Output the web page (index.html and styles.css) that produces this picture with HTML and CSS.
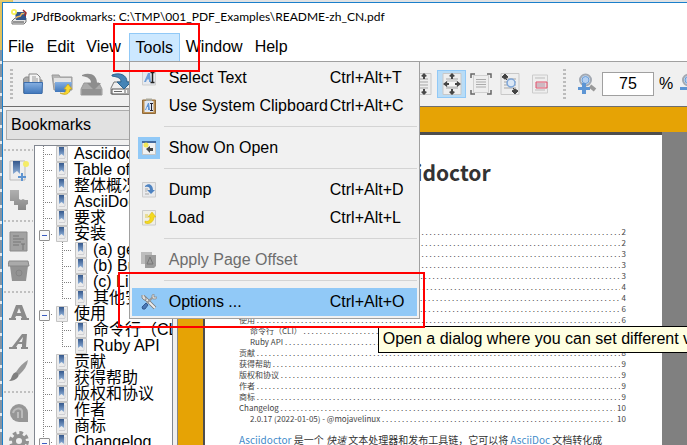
FILE: index.html
```html
<!DOCTYPE html>
<html lang="en">
<head>
<meta charset="utf-8">
<title>JPdfBookmarks</title>
<link rel="stylesheet" href="styles.css">
</head>
<body>
<svg class="defs" aria-hidden="true">
  <defs>
    <linearGradient id="blue" x1="0" y1="0" x2="0" y2="1"><stop offset="0" stop-color="#86b0e2"/><stop offset="1" stop-color="#4077bb"/></linearGradient>
    <linearGradient id="ribbon" x1="0" y1="0" x2="0" y2="1"><stop offset="0" stop-color="#35588c"/><stop offset="1" stop-color="#8fb0d8"/></linearGradient>
    <linearGradient id="gray" x1="0" y1="0" x2="0" y2="1"><stop offset="0" stop-color="#b0b0b0"/><stop offset="1" stop-color="#888"/></linearGradient>
    <symbol id="mark" viewBox="0 0 12 16"><path d="M.5.5h11v15H.5z" fill="#ececec" stroke="#c4c4c4"/><path d="M3 1h5v9l-2.500-2L3 10z" fill="url(#ribbon)"/><path d="M9 3v9M3 12.500h6" stroke="#d0d0d4" fill="none"/></symbol>
    <symbol id="page" viewBox="0 0 20 22"><path d="M1 .5h18v21H1z" fill="#eee" stroke="#c8c8c8"/><path d="M4 6h12M4 9h12M4 12h12M4 15h12" stroke="#a5a5a5"/></symbol>
    <symbol id="letter" viewBox="0 0 14 16"><path d="M.5.5h13v14.500H.5z" fill="#e6e9ee" stroke="#cfcfcf"/><path d="M2 12 6 3h2l1 9H7V9.500H5L4 12z" fill="#6d9fd9"/><path d="M8.500 2.500h4M10.500 3v9M8.500 12.500h4" stroke="#222" stroke-width="1.500"/></symbol>
    <symbol id="zoom" viewBox="0 0 20 22"><path d="m13 13 5 4" stroke="#999" stroke-width="4"/><circle cx="8.500" cy="7" r="5.500" fill="#d2e4f8" stroke="#a3a9b2" stroke-width="2"/><circle cx="8.500" cy="7" r="3.500" fill="#b4d0f2" stroke="#6a9cd4"/></symbol>
  </defs>
</svg>
<div class="window">
  <header class="titlebar">
    <svg width="16" height="16" viewBox="0 0 16 16"><path d="M1 12 4 9h11v4l-2 2H1z" fill="#e6e6e6" stroke="#777"/><path d="M2 13h11" stroke="#444"/><path d="M4 3h9l2 2v6H5z" fill="#32568c"/><path d="M5 9c2-3 4 0 5-3s2 0 3-2" fill="none" stroke="#f0b45a" stroke-width="1.500"/><path d="m12 1 3 3-1 3" stroke="#9c2b2b" fill="none" stroke-width="1.500"/><circle cx="3" cy="3" r="3" fill="#f7ef58"/><circle cx="3" cy="3" r="1.200" fill="#fff"/></svg>
    <h1>JPdfBookmarks: C:\TMP\001_PDF_Examples\README-zh_CN.pdf</h1>
  </header>
  <nav class="menubar">
    <button>File</button><button>Edit</button><button>View</button>
    <div class="open">
      <button class="active">Tools</button>
      <div class="popup">
        <button><span class="pic"><svg width="14" height="16"><use href="#letter"/></svg></span><span>Select Text</span><kbd>Ctrl+Alt+T</kbd></button>
        <button><span class="pic"><svg width="14" height="16" viewBox="0 0 14 16"><path d="M.5 2h13v13.500H.5z" fill="#bd8f50" stroke="#8f6a3a"/><path d="M2.500 3h9v11h-9z" fill="#dfe8f4"/><path d="M4 .5h6V3H4z" fill="#aaa89a"/><path d="m3 12 3-7h1l1 7H6V9H5l-1 3z" fill="#5f94d4"/><path d="M8 5.500h3M9.500 5v7M8 12.500h3" stroke="#223"/></svg></span><span>Use System Clipboard</span><kbd>Ctrl+Alt+C</kbd></button>
        <hr>
        <button><span class="pic on"><svg width="14" height="14" viewBox="0 0 14 14"><path d="M.5 1h13v12.500H.5z" fill="#f1f1f1" stroke="#c5c5c5"/><path d="M0 1h14" stroke="#446c9f" stroke-width="2"/><circle cx="4" cy="4" r="2.500" fill="#f3e756"/><path d="m4 8 4-3v2h3v3H8v2z" fill="#454545"/></svg></span><span>Show On Open</span></button>
        <hr>
        <button><span class="pic"><svg width="14" height="16" viewBox="0 0 14 16"><path d="M.5.5h13v14.500H.5z" fill="#e9eaec" stroke="#ccc"/><path d="M3 4c4-4 8-1 8 4h2l-4 4-4-4h3C8 5 6 4 3 5z" fill="#4e83c1"/><path d="M3 7h3M3 9h2M3 12h4" stroke="#aaa"/></svg></span><span>Dump</span><kbd>Ctrl+Alt+D</kbd></button>
        <button><span class="pic"><svg width="14" height="16" viewBox="0 0 14 16"><path d="M.5.5h13v14.500H.5z" fill="#f0efe6" stroke="#ccc"/><path d="M3 11c3 1 5 0 5-4H6l4-5 4 5h-2c0 5-5 8-9 6z" fill="#f3d91f" stroke="#d3b313" stroke-width=".5"/><path d="M3 5h3M3 7h3" stroke="#e0c94c"/></svg></span><span>Load</span><kbd>Ctrl+Alt+L</kbd></button>
        <hr>
        <button disabled><span class="pic"><svg width="16" height="16" viewBox="0 0 16 16"><path d="M0 0h11v12H0z" fill="#bdbdbd"/><path d="M4 3h11v11l-2 2H4z" fill="#9c9c9c"/><path d="m6 12 3-7 3 7z" fill="none" stroke="#777"/></svg></span><span>Apply Page Offset</span></button>
        <hr>
        <button class="hot"><span class="pic"><svg width="16" height="16" viewBox="0 0 16 16"><path d="M3 3 14 14" stroke="#777" stroke-width="3.500"/><path d="M3 3 14 14" stroke="#eee" stroke-width="2"/><path d="M1 1v3l2 2h2V4L3 1" fill="#ddd" stroke="#888"/><path d="m6 9 7-7" stroke="#999" stroke-width="2"/><path d="M11 3V1l2-1v3h3l-1 2h-3z" fill="#ddd" stroke="#888" stroke-width=".7"/><path d="m1 13 4-4 2 2-3 4q-3 1-3-2z" fill="#4a78b5" stroke="#335a91"/></svg></span><span>Options ...</span><kbd>Ctrl+Alt+O</kbd></button>
        <div class="tip" role="tooltip">Open a dialog where you can set different values</div>
        <div class="frame frame-options"></div>
      </div>
      <div class="frame frame-tools"></div>
    </div>
    <button>Window</button><button>Help</button>
  </nav>
  <div class="toolbar">
    <div class="tools files">
      <i class="grip"></i>
      <button aria-label="Open"><svg width="22" height="22" viewBox="0 0 22 22"><path d="M1.500 20V6l2-2H9l1 3h10v13z" fill="#aaa" stroke="#8a8a8a"/><path d="M7 11V1h8l3 3v7z" fill="#f4f4f4" stroke="#888"/><path d="M10 4h4M10 6h6M10 8h6" stroke="#999"/><path d="M2 9.500h18.500l-.5 11H2z" fill="url(#blue)" stroke="#3b6eae"/></svg></button>
      <button aria-label="Reopen"><svg width="22" height="22" viewBox="0 0 22 22"><path d="M1 2h7l1 2h12v13H3z" fill="#b5b5b5" stroke="#999"/><path d="M3 5h17v5H3z" fill="#e3e3e3"/><path d="M4 9h17l-2 10H4z" fill="url(#blue)"/><path d="M9 20c5 1 6-1 6-4h-2l4-5 4 5h-2c0 5-5 7-10 4z" fill="#f8d72e" stroke="#c9a41a" stroke-width=".7"/></svg></button>
      <button aria-label="Save"><svg width="23" height="23" viewBox="0 0 23 23"><path d="M4 10h15l3 6v6H1v-6z" fill="#aaa" stroke="#999"/><path d="M2 16h19v6H2z" fill="#929292"/><path d="M2 2c8-3 15 0 15 8h4l-7 7-7-7h4c0-4-3-6-9-7z" fill="#8d8d8d"/></svg></button>
      <button aria-label="Save as"><svg width="23" height="23" viewBox="0 0 23 23"><path d="M4 9h15l3 6v6H1v-6z" fill="#eee" stroke="#777"/><path d="M2 16h19v5H2z" fill="#fafafa" stroke="#555"/><path d="M4 18.500h8M15 17v3M18 17v3" stroke="#666"/><path d="M2 2c8-3 15 0 15 7h4l-7 7-7-7h4c0-4-3-5-9-6z" fill="#4584b6" stroke="#2d648f"/></svg></button>
    </div>
    <div class="tools views">
      <button aria-label="Fit height"><svg width="20" height="22" viewBox="0 0 20 22"><use href="#page"/><path d="M9 3 12 0l3 3-2 1v2h-2V4zM9 19l3 3 3-3-2-1v-2h-2v2z" fill="#484848"/></svg></button>
      <button class="picked" aria-label="Fit page"><svg width="20" height="22" viewBox="0 0 20 22"><use href="#page"/><path d="M5 8h10v6H5z" fill="#f5f5f5" stroke="#bbb"/><path d="m7 3 3-3 3 3-2 1v2H9V4zM7 19l3 3 3-3-2-1v-2H9v2zM1 11l4-3v2h2v2H5v2zM19 11l-4-3v2h-2v2h2v2z" fill="#454545"/></svg></button>
      <button aria-label="Fit native"><svg width="22" height="22" viewBox="0 0 22 22"><path d="M3.500 2.500h15v17h-15z" fill="#eee" stroke="#d0d0d0"/><path d="M6 6.500h10M6 9h10M6 11.500h10M6 14h10" stroke="#aaa"/><path d="M1 5V1h4M17 1h4v4M1 17v4h4M17 21h4v-4" fill="none" stroke="#666" stroke-width="1.500"/></svg></button>
      <button aria-label="Fit selection"><svg width="20" height="22" viewBox="0 0 20 22"><use href="#page"/><circle cx="11" cy="10" r="4" fill="#dbe7f5" stroke="#7ea6d8" stroke-width="1.500"/><path d="m2 4 3-3 3 3-3 2zM12 18l3-2 3 2-3 3zM5 5l2 2M13 15l2 2" fill="#444" stroke="#444"/></svg></button>
      <button aria-label="Fit rectangle"><svg width="16" height="20" viewBox="0 0 16 20"><path d="M.5 1h15v18H.5z" fill="#eee" stroke="#ccc"/><path d="M3 4h10M3 16h10" stroke="#bbb"/><path d="M4 10h9M4 12h9" stroke="#889"/><path d="M4 8h11v6H4z" fill="#e9b7c0" fill-opacity=".4" stroke="#e0506b"/></svg></button>
    </div>
    <div class="tools zoomer">
      <i class="grip"></i>
      <button aria-label="Zoom in"><svg width="20" height="22" viewBox="0 0 20 22"><use href="#zoom"/><path d="M5 10h4v4h4v3H9v4H5v-4H1v-3h4z" fill="#5d95d4"/></svg></button>
      <label class="percent"><input type="text" value="75" aria-label="Zoom"><span>%</span></label>
      <button aria-label="Zoom out"><svg width="20" height="22" viewBox="0 0 20 22"><use href="#zoom"/><path d="M0 14h12v3H0z" fill="#5d95d4"/></svg></button>
    </div>
  </div>
  <div class="main">
    <section class="side">
      <h2>Bookmarks</h2>
      <div class="cols">
        <div class="strip">
          <i class="hgrip"></i>
          <button aria-label="Add bookmark"><svg width="20" height="22" viewBox="0 0 20 22"><path d="M1 1h15v19H1z" fill="#eee" stroke="#bbb"/><path d="M4 1h7v13l-3-3-4 3z" fill="url(#ribbon)"/><circle cx="17" cy="4" r="3" fill="#f5ec66"/><path d="M12 13h2v3h3v2h-3v3h-2v-3H9v-2h3z" fill="#5e94d0"/></svg></button>
          <button aria-label="Add child"><svg width="20" height="22" viewBox="0 0 20 22"><path d="M1 1h9v9l2 1 2-1 2 1h3v4l-2 1v5H9v-5H5v-4H1z" fill="url(#gray)"/></svg></button>
          <i class="hgrip"></i>
          <button aria-label="Rename"><svg width="20" height="22" viewBox="0 0 20 22"><path d="M1 1h17v19H1z" fill="#a2a2a2" stroke="#8a8a8a"/><path d="M4 5h6M4 8h11M4 11h8M4 14h6M12 13h4M14 13v6" stroke="#777"/></svg></button>
          <button aria-label="Delete"><svg width="22" height="22" viewBox="0 0 22 22"><path d="M2 6h18l-2 15H4z" fill="#939393"/><path d="M1 1h19l1 5H0z" fill="#aaa" stroke="#888"/><circle cx="11" cy="13" r="3" fill="none" stroke="#858585"/></svg></button>
          <i class="hgrip"></i>
          <button aria-label="Bold"><svg width="20" height="22" viewBox="0 -2 20 22"><path fill-rule="evenodd" d="M0 16v-2h2L7 1h6l5 13h2v2h-8v-2h1l-1-2H7l-1 2h1v2zM8 9h4l-2-5z" fill="#8b8b8b"/></svg></button>
          <button aria-label="Italic"><svg width="20" height="22" viewBox="0 -2 20 22"><path fill-rule="evenodd" d="M0 16v-2h3L13 1h5l-1 13h2v2h-7v-2h1v-3H9l-2 3h1v2zM10 9h3l1-5z" fill="#8b8b8b"/></svg></button>
          <button aria-label="Colour"><svg width="20" height="22" viewBox="0 0 20 22"><path d="M19 0q-1 8-9 15l-3-3Q12 4 19 0z" fill="#999"/><path d="M7 12q4 2 2 5-3 4-9 4 2-1 3-5 1-3 4-4z" fill="#7f7f7f"/></svg></button>
          <i class="hgrip"></i>
          <button aria-label="Link"><svg width="20" height="22" viewBox="0 -1 20 22"><path d="M10 1a9 9 0 0 1 9 9v9h-9A9 9 0 0 1 10 1z" fill="#969696"/><path d="M4 10c1-5 8-6 9-2v7M9 9v6" fill="none" stroke="#bbb" stroke-width="2"/></svg></button>
          <button aria-label="Settings"><svg width="20" height="20" viewBox="0 0 20 20"><circle cx="10" cy="10" r="8" fill="none" stroke="#929292" stroke-width="4" stroke-dasharray="3.500 2.800"/><circle cx="10" cy="10" r="5" fill="none" stroke="#929292" stroke-width="4"/></svg></button>
        </div>
        <ul class="tree">
          <li><i class="limb"></i><svg><use href="#mark"/></svg>Asciidoctor</li>
          <li><i class="limb"></i><svg><use href="#mark"/></svg>Table of Contents</li>
          <li><i class="limb"></i><svg><use href="#mark"/></svg>整体概况</li>
          <li><i class="limb"></i><svg><use href="#mark"/></svg>AsciiDoc</li>
          <li><i class="limb"></i><svg><use href="#mark"/></svg>要求</li>
          <li><i class="limb fold"></i><svg><use href="#mark"/></svg>安装</li>
          <li><i class="limb pass"></i><i class="limb sub"></i><svg><use href="#mark"/></svg>(a) gem install</li>
          <li><i class="limb pass"></i><i class="limb sub"></i><svg><use href="#mark"/></svg>(b) Bundler</li>
          <li><i class="limb pass"></i><i class="limb sub"></i><svg><use href="#mark"/></svg>(c) Linux</li>
          <li><i class="limb pass"></i><i class="limb sub end"></i><svg><use href="#mark"/></svg>其他安装</li>
          <li><i class="limb fold"></i><svg><use href="#mark"/></svg>使用</li>
          <li><i class="limb pass"></i><i class="limb sub"></i><svg><use href="#mark"/></svg>命令行（CLI）</li>
          <li><i class="limb pass"></i><i class="limb sub end"></i><svg><use href="#mark"/></svg>Ruby API</li>
          <li><i class="limb"></i><svg><use href="#mark"/></svg>贡献</li>
          <li><i class="limb"></i><svg><use href="#mark"/></svg>获得帮助</li>
          <li><i class="limb"></i><svg><use href="#mark"/></svg>版权和协议</li>
          <li><i class="limb"></i><svg><use href="#mark"/></svg>作者</li>
          <li><i class="limb"></i><svg><use href="#mark"/></svg>商标</li>
          <li><i class="limb fold"></i><svg><use href="#mark"/></svg>Changelog</li>
        </ul>
      </div>
    </section>
    <section class="viewer">
      <article class="sheet">
        <h3>Asciidoctor</h3>
        <ol class="toc">
          <li><span>整体概况</span><b>2</b></li>
          <li><span>AsciiDoc</span><b>2</b></li>
          <li><span>要求</span><b>3</b></li>
          <li><span>安装</span><b>3</b></li>
          <li class="in"><span>(a) gem install</span><b>3</b></li>
          <li class="in"><span>(b) Bundler</span><b>4</b></li>
          <li class="in"><span>(c) Linux</span><b>4</b></li>
          <li class="in"><span>其他安装</span><b>6</b></li>
          <li><span>使用</span><b>6</b></li>
          <li class="in"><span>命令行（CLI）</span><b>6</b></li>
          <li class="in"><span>Ruby API</span><b>8</b></li>
          <li><span>贡献</span><b>8</b></li>
          <li><span>获得帮助</span><b>9</b></li>
          <li><span>版权和协议</span><b>9</b></li>
          <li><span>作者</span><b>9</b></li>
          <li><span>商标</span><b>9</b></li>
          <li><span>Changelog</span><b>10</b></li>
          <li class="in"><span>2.0.17 (2022-01-05) - @mojavelinux</span><b>10</b></li>
        </ol>
        <p><a href="#">Asciidoctor</a> 是一个 <em>快速</em> 文本处理器和发布工具链，它可以将 <a href="#">AsciiDoc</a> 文档转化成</p>
      </article>
    </section>
  </div>
</div>
</body>
</html>
```
FILE: styles.css
```css
* { box-sizing: border-box; }
html, body { height: 100%; margin: 0; }
body {
  overflow: hidden;
  padding: 2px 0 0 2px;
  background:
    linear-gradient(90deg, #e8cc6c 12px, transparent 12px) 0 0 / 100% 2px no-repeat,
    linear-gradient(#e2c25e 50px, transparent 50px),
    repeating-linear-gradient(#8494a4 0 13px, #e8e8e8 13px 16px);
  font: 16px/28px "Liberation Sans", "Noto Sans CJK SC", sans-serif;
  color: #000;
}
body::before { content: ""; position: absolute; top: 0; left: 13px; right: 0; height: 2px; background: #e0e2e4; }
.defs { position: absolute; width: 0; height: 0; }
button { border: 0; margin: 0; padding: 0; background: none; font: inherit; color: inherit; display: flex; align-items: center; justify-content: center; }
svg { display: block; flex: none; }

.window { height: 100%; display: flex; flex-direction: column; overflow: hidden; background: #f0f0f0; border: 1px solid #1b7fcb; border-width: 1px 0 0 1px; }
.titlebar { flex: none; height: 30px; display: flex; align-items: center; gap: 4px; padding: 0 0 2px 8px; background: #fff; }
.titlebar h1 { margin: 0; font: 12px/28px Lato, sans-serif; white-space: nowrap; }

.menubar { flex: none; display: flex; height: 29px; background: #fff; border-bottom: 1px solid #a0a0a0; }
.menubar > button, .open > button { height: 28px; padding: 0 6px; }
.menubar > button:first-child { padding-left: 5px; padding-right: 7px; }
.open { position: relative; margin-left: 2px; }
.open > .active { width: 51px; background: #cce8ff; border: 1px solid #91c9f7; border-bottom: 0; }
.popup { position: absolute; z-index: 2; top: 28px; left: 0; width: 291px; padding: 2px; background: #f1f1f1; border: 1px solid #a0a0a0; line-height: 28px; }
.popup button { width: 100%; height: 28px; justify-content: flex-start; white-space: nowrap; }
.popup .pic { display: flex; align-items: center; justify-content: center; width: 22px; height: 22px; margin: 0 9px 0 6px; }
.popup .on { background: #91c9f7; }
.popup kbd { position: absolute; left: 200px; font: inherit; }
.popup button:disabled { color: #6d6d6d; }
.popup .hot { background: #91c9f7; }
.popup hr { height: 1px; margin: 6px 0 7px 32px; border: 0; background: #d4d4d4; }
.frame { position: absolute; z-index: 4; border: 2px solid #f00; pointer-events: none; }
.frame-tools { left: -16px; top: -10px; width: 87px; height: 49px; }
.frame-options { left: -12px; top: 210px; width: 307px; height: 56px; }
.tip { position: absolute; z-index: 3; left: 248px; top: 264px; height: 27px; padding: 0 4px; background: #ffffe1; border: 1px solid #000; line-height: 24px; white-space: nowrap; }

.toolbar { flex: none; display: flex; align-items: center; height: 45px; border-bottom: 1px solid #6e6e6e; }
.tools { flex: none; display: flex; align-items: center; gap: 7px; }
.files { padding-left: 7px; width: 408px; }
.grip { width: 3px; height: 30px; margin-right: 2px; background: repeating-linear-gradient(#bcbcbc 0 2px, transparent 2px 4px); }
.views button { min-width: 22px; height: 28px; }
.views .picked { width: 29px; margin: 0 -3px; background: #b9dcf6; border: 1px solid #91c9f7; }
.views button:last-child { margin-left: 1px; }
.zoomer { margin-left: 12px; }
.zoomer .grip { margin-right: 4px; }
.percent { display: flex; align-items: center; gap: 5px; }
.zoomer .percent input { width: 52px; height: 24px; margin-left: -2px; padding: 0; border: 1px solid #a0a0a0; background: #fff; font: inherit; text-align: center; }

.main { flex: 1; min-height: 0; display: flex; }
.side { flex: none; width: 175px; display: flex; flex-direction: column; padding: 3px 4px 0 0; border-right: 1px solid #888; }
.side h2 { flex: none; height: 30px; margin: 0 0 5px 3px; padding-left: 4px; background: #e1e1e1; border: 1px solid #adadad; font: 16px/28px "Liberation Sans", sans-serif; }
.cols { flex: 1; min-height: 0; display: flex; }
.strip { flex: none; width: 31px; display: flex; flex-direction: column; align-items: center; gap: 7px; overflow: hidden; padding-top: 2px; }
.strip button { flex: none; }
.hgrip { flex: none; width: 29px; height: 2px; margin: 2px 0; background: repeating-linear-gradient(90deg, #c0c0c0 0 2px, transparent 2px 4px); }
.tree { flex: 1; min-width: 0; margin: 0; padding: 0; list-style: none; overflow: hidden; background: #fff; border: 1px solid #828790; border-bottom: 0; }
.tree li { display: flex; align-items: center; height: 16px; line-height: 16px; white-space: nowrap; }
.tree svg { width: 12px; height: 16px; margin-right: 6px; }
.limb { position: relative; flex: none; width: 21px; height: 16px; background: repeating-linear-gradient(#808080 0 1px, #fff 1px 2px) 8px 0 / 1px 100% no-repeat, repeating-linear-gradient(90deg, #808080 0 1px, #fff 1px 2px) 8px 8px / 9px 1px no-repeat; }
.limb.pass { background: repeating-linear-gradient(#808080 0 1px, #fff 1px 2px) 8px 0 / 1px 100% no-repeat; }
.limb.sub { width: 19px; background-position: 6px 0, 6px 8px; }
.limb.end { background-size: 1px 8px, 9px 1px; }
.fold::before { content: ""; position: absolute; left: 4px; top: 4px; width: 9px; height: 9px; border: 1px solid #919191; border-radius: 1px; background: linear-gradient(#3a5cc0, #3a5cc0) center / 5px 1px no-repeat, #fafafa; }

.viewer { flex: 1; min-width: 0; display: flex; border: solid #e6a305; border-width: 25px 0 0 25px; background: #808080; }
.sheet { flex: 1; min-width: 0; margin-right: 25px; padding: 21px 36px 0 34px; background: #fff; border: solid #4e4e4e; border-width: 3px 0 0 2px; color: #333; font-family: "Noto Sans CJK SC", sans-serif; }
.sheet h3 { margin: 0 0 38px; text-align: center; font-size: 21px; line-height: 32px; font-weight: 700; }
.toc { margin: 0; padding: 0; list-style: none; font-size: 8px; line-height: 11px; color: #444; }
.toc li { display: flex; height: 11px; white-space: nowrap; }
.toc .in { padding-left: 11px; }
.toc span { flex: 1; overflow: hidden; margin-right: 2px; }
.toc span::after { content: " . . . . . . . . . . . . . . . . . . . . . . . . . . . . . . . . . . . . . . . . . . . . . . . . . . . . . . . . . . . . . . . . . . . . . . . . . . . . . . . . . . . . . . . . . . . . . . . . . . . . . . . . ."; }
.toc b { font-weight: 400; }
.sheet p { margin: 8px 0 0; font-size: 10px; line-height: 16px; white-space: nowrap; }
.sheet a { color: #428bca; text-decoration: none; }
```
